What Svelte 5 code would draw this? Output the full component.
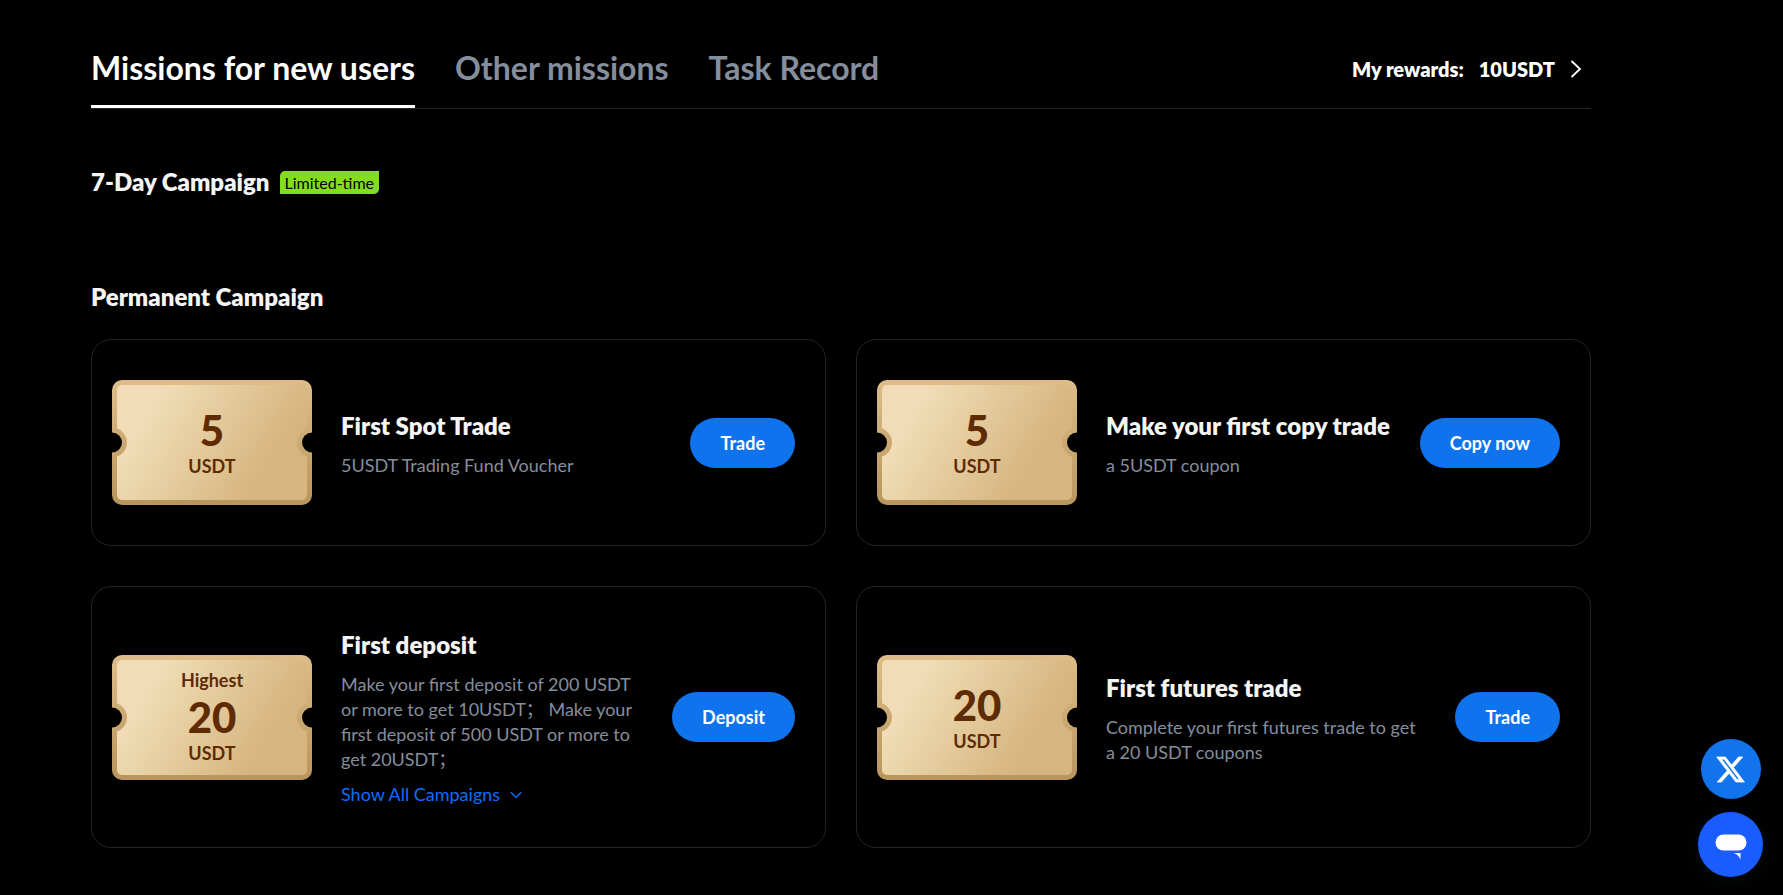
<script>
  const tabs = ['Missions for new users', 'Other missions', 'Task Record'];
  let active = $state(0);

  const missions = [
    { amount: 5, title: 'First Spot Trade', text: '5USDT Trading Fund Voucher', action: 'Trade' },
    { amount: 5, title: 'Make your first copy trade', text: 'a 5USDT coupon', action: 'Copy now' },
    {
      top: 'Highest',
      amount: 20,
      title: 'First deposit',
      text: 'Make your first deposit of 200 USDT or more to get 10USDT； Make your first deposit of 500 USDT or more to get 20USDT；',
      action: 'Deposit',
      more: true
    },
    { amount: 20, title: 'First futures trade', text: 'Complete your first futures trade to get a 20 USDT coupons', action: 'Trade' }
  ];
</script>

<main>
  <header>
    <nav>
      {#each tabs as tab, i}
        <button class="tab" class:active={active === i} onclick={() => (active = i)}>{tab}</button>
      {/each}
    </nav>
    <a class="rewards" href="#rewards">
      <span>My rewards:</span>
      <span class="sum">10USDT</span>
      <svg width="12" height="18" viewBox="0 0 12 18" aria-hidden="true">
        <path d="M1.5 1 L10 9 L1.5 17" fill="none" stroke="#fff" stroke-width="1.8" />
      </svg>
    </a>
  </header>

  <section class="week">
    <h2>7-Day Campaign</h2>
    <span class="badge">Limited-time</span>
  </section>

  <h2>Permanent Campaign</h2>

  <div class="grid">
    {#each missions as m, i}
      <article>
        <div class="ticket">
          <svg viewBox="0 0 200 125" aria-hidden="true">
            <defs>
              <linearGradient id="edge{i}" gradientUnits="userSpaceOnUse" x1="0" y1="0" x2="0" y2="125">
                <stop offset="0" stop-color="#debd8a" />
                <stop offset="1" stop-color="#b8955b" />
              </linearGradient>
              <linearGradient id="face{i}" gradientUnits="userSpaceOnUse" x1="40" y1="25" x2="151" y2="94">
                <stop offset="0" stop-color="#f1dcb7" />
                <stop offset="0.12" stop-color="#edd9af" />
                <stop offset="1" stop-color="#d6b580" />
              </linearGradient>
              <clipPath id="shape{i}"><rect width="200" height="125" rx="10" /></clipPath>
            </defs>
            <g clip-path="url(#shape{i})">
              <rect width="200" height="125" fill="url(#edge{i})" />
              <rect x="5" y="5" width="190" height="115" rx="5" fill="url(#face{i})" />
              <circle cx="0" cy="62.5" r="15" fill="url(#edge{i})" />
              <circle cx="200" cy="62.5" r="15" fill="url(#edge{i})" />
            </g>
            <circle cx="0" cy="62.5" r="10" />
            <circle cx="200" cy="62.5" r="10" />
          </svg>
          <div class="value">
            {#if m.top}<span>{m.top}</span>{/if}
            <strong>{m.amount}</strong>
            <span>USDT</span>
          </div>
        </div>
        <div class="info">
          <h3>{m.title}</h3>
          <p>{m.text}</p>
          {#if m.more}
            <button class="more">
              Show All Campaigns
              <svg width="12" height="8" viewBox="0 0 12 8" aria-hidden="true">
                <path d="M0.7 1 L6 6.5 L11.3 1" fill="none" stroke="#0d6efd" stroke-width="1.3" />
              </svg>
            </button>
          {/if}
        </div>
        <button class="action">{m.action}</button>
      </article>
    {/each}
  </div>
</main>

<aside>
  <a class="round x" href="#x" aria-label="X">
    <svg width="31" height="31" viewBox="0 0 24 24" aria-hidden="true">
      <path fill="#fff" stroke="#fff" stroke-width="0.5" d="M18.244 2.25h3.308l-7.227 8.26 8.502 11.24H16.17l-5.214-6.817L4.99 21.75H1.68l7.73-8.835L1.254 2.25H8.08l4.713 6.231zm-1.161 17.52h1.833L7.084 4.126H5.117z" />
    </svg>
  </a>
  <button class="round chat" aria-label="Chat">
    <svg width="32" height="26" viewBox="0 0 32 26" aria-hidden="true">
      <rect x="0.5" y="0.5" width="31" height="16" rx="8" fill="#fff" />
      <path d="M18.5 19 H25.5 V25.5 C24.5 22.5 22 20.2 18.5 19 Z" fill="#fff" />
    </svg>
  </button>
</aside>

<style>
  :global(body) {
    margin: 0;
    background: #000;
    color: #fff;
    font-family: Lato, 'Noto Sans CJK SC', sans-serif;
  }
  button {
    border: 0;
    padding: 0;
    background: none;
    font: inherit;
    cursor: pointer;
  }
  a {
    color: inherit;
    text-decoration: none;
  }
  h2, h3, p {
    margin: 0;
  }
  main {
    padding: 30px 192px 40px 91px;
  }
  header {
    display: flex;
    justify-content: space-between;
    align-items: stretch;
    border-bottom: 1px solid #20262d;
  }
  nav {
    display: flex;
    gap: 40px;
  }
  .tab {
    height: 78px;
    font-size: 32px;
    font-weight: 700;
    line-height: 75px;
    color: #848e9c;
    border-bottom: 3px solid transparent;
  }
  .tab.active {
    color: #fff;
    border-bottom-color: #fff;
  }
  .rewards {
    display: flex;
    align-items: center;
    padding-right: 9px;
    font-size: 20px;
    font-weight: 800;
  }
  .sum {
    margin: 0 15px;
  }
  h2 {
    font-size: 24px;
    font-weight: 800;
    line-height: 36px;
    color: #f5f5f5;
  }
  .week {
    display: flex;
    align-items: center;
    gap: 10px;
    margin: 55px 0 79px;
  }
  .badge {
    padding: 0 5px;
    border-radius: 5px 0;
    background: #84dc1e;
    color: #000;
    font-size: 16px;
    line-height: 23px;
  }
  .grid {
    display: grid;
    grid-template-columns: 1fr 1fr;
    gap: 40px 30px;
    margin-top: 24px;
  }
  article {
    display: flex;
    align-items: center;
    padding: 40px 30px 40px 20px;
    border: 1px solid #20262d;
    border-radius: 20px;
  }
  .ticket {
    position: relative;
    flex: none;
    width: 200px;
    height: 125px;
    display: flex;
    align-items: center;
    justify-content: center;
  }
  .ticket svg {
    position: absolute;
    inset: 0;
  }
  .value {
    position: relative;
    display: flex;
    flex-direction: column;
    align-items: center;
    color: #5f2b02;
    font-size: 18px;
    font-weight: 700;
    line-height: 25px;
  }
  strong {
    font-size: 42px;
    line-height: 48px;
  }
  .info {
    flex: 1;
    margin: 0 28px 0 29px;
  }
  h3 {
    font-size: 24px;
    font-weight: 800;
    line-height: 36px;
    color: #f5f5f5;
    white-space: nowrap;
  }
  p {
    margin-top: 9px;
    font-size: 18px;
    line-height: 25px;
    color: #848e9c;
  }
  .more {
    display: flex;
    align-items: center;
    gap: 10px;
    margin-top: 10px;
    font-size: 18px;
    line-height: 25px;
    color: #0d6efd;
  }
  .action {
    flex: none;
    height: 50px;
    padding: 0 30px;
    border-radius: 25px;
    background: #0f73ee;
    color: #fff;
    font-size: 18px;
    font-weight: 700;
  }
  aside {
    position: fixed;
    right: 20px;
    bottom: 18px;
    display: flex;
    flex-direction: column;
    align-items: center;
    gap: 13px;
  }
  .round {
    display: flex;
    align-items: center;
    justify-content: center;
    border-radius: 50%;
  }
  .x {
    width: 60px;
    height: 60px;
    background: #1174ec;
  }
  .chat {
    width: 65px;
    height: 65px;
    background: #1a5cff;
    box-shadow: 0 4px 24px rgba(20, 60, 60, 0.2);
  }
  .chat svg {
    margin-top: 4px;
  }
</style>
